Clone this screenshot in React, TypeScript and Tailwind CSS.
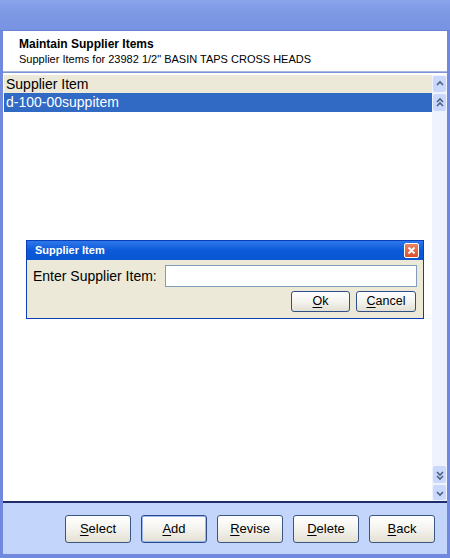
import React from "react";

const F = { fontFamily: '"Liberation Sans", Arial, sans-serif' } as const;

function U({ c }: { c: string }) {
  return <span className="underline underline-offset-2">{c}</span>;
}

function XpButton({ first, rest, def }: { first: string; rest: string; def?: boolean }) {
  return (
    <div
      className={`w-[66px] h-[28px] rounded-[3px] border ${def ? "border-[#2a4a8a] shadow-[inset_0_0_0_1px_#9cb8ee]" : "border-[#3b5680]"} bg-gradient-to-b from-[#ffffff] via-[#f4f3ee] to-[#e3e0d3] flex items-center justify-center text-[13px] text-black`}
    >
      <span>
        <U c={first} />
        {rest}
      </span>
    </div>
  );
}

function SmallButton({ first, rest, w }: { first: string; rest: string; w: string }) {
  return (
    <div
      className={`${w} h-[21px] rounded-[3px] border border-[#2f5088] bg-gradient-to-b from-[#ffffff] via-[#f4f3ee] to-[#e3e0d3] flex items-center justify-center text-[12.5px] text-black`}
    >
      <span>
        <U c={first} />
        {rest}
      </span>
    </div>
  );
}

function Chevron({ dir, double }: { dir: "up" | "down"; double?: boolean }) {
  const paths =
    dir === "up"
      ? double
        ? ["M3 7 L6 4 L9 7", "M3 11 L6 8 L9 11"]
        : ["M3 9 L6 6 L9 9"]
      : double
      ? ["M3 5 L6 8 L9 5", "M3 9 L6 12 L9 9"]
      : ["M3 7 L6 10 L9 7"];
  return (
    <svg width="12" height="16" viewBox="0 0 12 16">
      {paths.map((d, i) => (
        <path key={i} d={d} fill="none" stroke="#4d6185" strokeWidth="1.6" />
      ))}
    </svg>
  );
}

function ScrollBtn({ dir, double, h }: { dir: "up" | "down"; double?: boolean; h: string }) {
  return (
    <div className={`w-[13px] ${h} rounded-[2px] bg-[#c9d8fc] flex items-center justify-center`}>
      <Chevron dir={dir} double={double} />
    </div>
  );
}

export default function App() {
  return (
    <div
      style={F}
      className="relative w-[450px] h-[558px] bg-[#7089df] flex flex-col overflow-hidden"
    >
      {/* title bar */}
      <div className="h-[31px] shrink-0 bg-gradient-to-b from-[#8aa4ec] via-[#7c97e3] to-[#7893e2] border-b border-[#6a85d8]" />
      <div className="flex-1 flex flex-col px-[3px] pb-[4px]">
        {/* header */}
        <div className="h-[41px] bg-white pl-[16px] pt-[6px] flex flex-col border-b border-[#a9b8e0]">
          <div className="text-[12px] font-bold leading-[15px] text-black">Maintain Supplier Items</div>
          <div className="text-[11px] leading-[15px] text-black">
            Supplier Items for 23982 1/2" BASIN TAPS CROSS HEADS
          </div>
        </div>
        {/* list */}
        <div className="flex-1 bg-white flex border-t border-[#7f94d6] border-b-2 border-b-[#1e2c6a] pt-[2px] pl-[1px]">
          <div className="flex-1 flex flex-col">
            <div className="h-[18px] bg-[#ece9d8] text-[14px] leading-[18px] text-black pl-[2px]">Supplier Item</div>
            <div className="h-[19px] bg-[#316ac5] text-[14px] leading-[19px] text-white pl-[2px]">d-100-00suppitem</div>
          </div>
          <div className="w-[15px] bg-[#eef3fe] flex flex-col items-center pt-[1px] pb-[1px] gap-[2px]">
            <ScrollBtn dir="up" h="h-[16px]" />
            <ScrollBtn dir="up" double h="h-[17px]" />
            <div className="flex-1" />
            <ScrollBtn dir="down" double h="h-[17px]" />
            <ScrollBtn dir="down" h="h-[15px]" />
          </div>
        </div>
        {/* buttons */}
        <div className="h-[51px] bg-[#c3d5fb] flex items-center justify-end gap-[10px] pr-[12px] pt-[1px]">
          <XpButton first="S" rest="elect" />
          <XpButton first="A" rest="dd" def />
          <XpButton first="R" rest="evise" />
          <XpButton first="D" rest="elete" />
          <XpButton first="B" rest="ack" />
        </div>
      </div>

      {/* dialog */}
      <div className="absolute left-[26px] top-[240px] w-[398px] h-[79px] border border-[#0b3fb8] bg-[#ece9d8] flex flex-col">
        <div className="h-[19px] bg-gradient-to-b from-[#2d77ec] via-[#0b5ad8] to-[#0a55d2] flex items-center justify-between pl-[8px] pr-[4px]">
          <span className="text-[11px] font-bold text-white">Supplier Item</span>
          <div className="w-[15px] h-[15px] rounded-[2px] border border-white bg-gradient-to-b from-[#e98466] to-[#d9502a] flex items-center justify-center">
            <svg width="9" height="9" viewBox="0 0 9 9">
              <path d="M1.5 1.5 L7.5 7.5 M7.5 1.5 L1.5 7.5" stroke="white" strokeWidth="1.8" />
            </svg>
          </div>
        </div>
        <div className="flex items-center pl-[6px] pr-[6px] pt-[5px]">
          <span className="text-[14px] text-black w-[132px]">Enter Supplier Item:</span>
          <div className="flex-1 h-[22px] bg-white border border-[#7f9db9]" />
        </div>
        <div className="flex justify-end gap-[6px] pr-[7px] pt-[4px]">
          <SmallButton first="O" rest="k" w="w-[59px]" />
          <SmallButton first="C" rest="ancel" w="w-[60px]" />
        </div>
      </div>
    </div>
  );
}
